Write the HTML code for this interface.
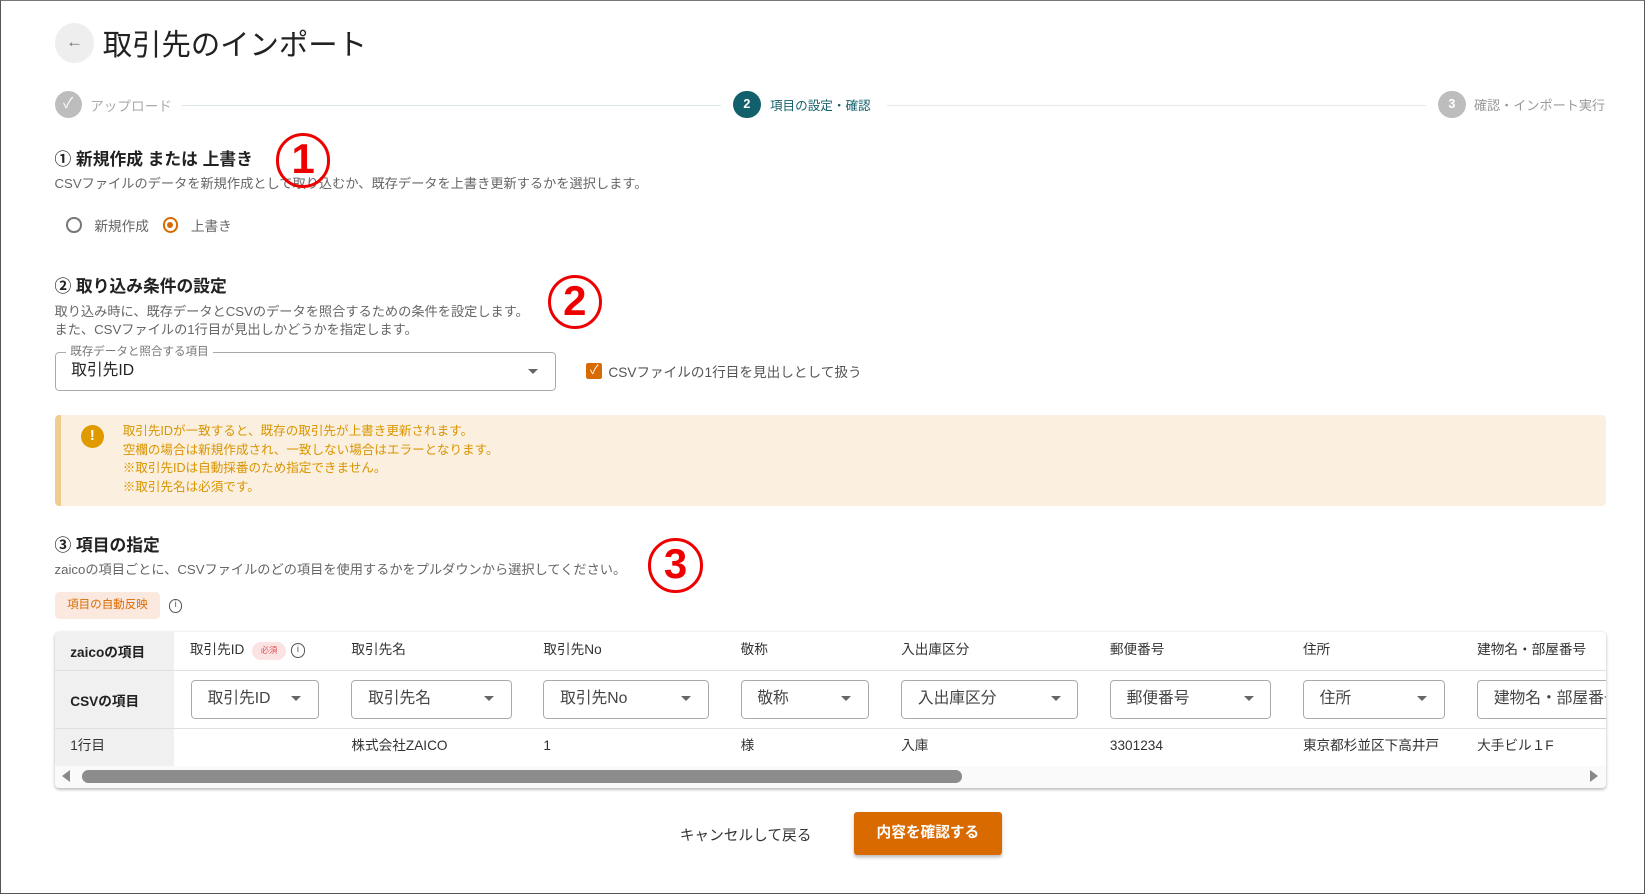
<!DOCTYPE html>
<html><head><meta charset="utf-8"><style>
*{box-sizing:border-box;margin:0;padding:0}
html,body{width:1645px;height:894px;overflow:hidden;background:#fff}
body{font-family:"Liberation Sans","Noto Sans CJK JP",sans-serif;color:#222}
#w{position:relative;width:1568px;height:852px;zoom:1.04911;border:1px solid #555;border-top:1px solid #777;overflow:hidden}
.a{position:absolute;white-space:nowrap}
.t{font-size:13px;color:#666}
.h{font-size:16px;font-weight:bold;color:#222}
.red{position:absolute;width:52px;height:52px;border:3px solid #e00;border-radius:50%;color:#e00;font-weight:bold;font-size:40px;line-height:44px;text-align:center}
.sel{position:absolute;border:1px solid #aaa;border-radius:4px;height:37px;font-size:15px;color:#444;padding-left:15px;line-height:35px;background:#fff;white-space:nowrap;overflow:hidden}
.sel .ar{position:absolute;right:16px;top:15px;width:0;height:0;border-left:5px solid transparent;border-right:5px solid transparent;border-top:5px solid #666}
.th{font-size:13px;color:#333;line-height:18px;height:18px}
</style></head><body><div id="w">
<div class="a" style="left:51px;top:21px;width:38px;height:38px;border-radius:50%;background:#eee;color:#777;font-size:16px;text-align:center;line-height:36px">←</div>
<div class="a" style="left:97px;top:20px;font-size:28px;color:#222">取引先のインポート</div>

<div class="a" style="left:51px;top:86px;width:26px;height:26px;border-radius:50%;background:#bdbdbd;color:#fff;text-align:center;line-height:26px;font-size:14px">✓</div>
<div class="a t" style="left:85px;top:90px;color:#aaa">アップロード</div>
<div class="a" style="left:173px;top:99px;width:513px;height:1px;background:#dde6e6"></div>
<div class="a" style="left:698px;top:86px;width:26px;height:26px;border-radius:50%;background:#12606b;color:#fff;text-align:center;line-height:26px;font-size:12px;font-weight:bold">2</div>
<div class="a" style="left:733px;top:90px;font-size:12px;color:#12606b">項目の設定・確認</div>
<div class="a" style="left:845px;top:99px;width:513px;height:1px;background:#e8e8e8"></div>
<div class="a" style="left:1370px;top:86px;width:26px;height:26px;border-radius:50%;background:#bdbdbd;color:#fff;text-align:center;line-height:26px;font-size:12px;font-weight:bold">3</div>
<div class="a" style="left:1404px;top:90px;font-size:12.5px;color:#999">確認・インポート実行</div>

<div class="a h" style="left:51px;top:138px">① 新規作成 または 上書き</div>
<div class="a t" style="left:51px;top:164px;font-size:12.6px">CSVファイルのデータを新規作成として取り込むか、既存データを上書き更新するかを選択します。</div>
<div class="red" style="left:262px;top:126px">1</div>
<div class="a" style="left:62px;top:206px;width:15px;height:15px;border:2px solid #777;border-radius:50%"></div>
<div class="a t" style="left:89px;top:204px">新規作成</div>
<div class="a" style="left:154px;top:206px;width:15px;height:15px;border:2px solid #d96a00;border-radius:50%"><div style="margin:2.5px;width:6px;height:6px;border-radius:50%;background:#d96a00"></div></div>
<div class="a t" style="left:181px;top:204px">上書き</div>

<div class="a h" style="left:51px;top:259px">② 取り込み条件の設定</div>
<div class="a t" style="left:51px;top:286px;font-size:12.6px">取り込み時に、既存データとCSVのデータを照合するための条件を設定します。</div>
<div class="a t" style="left:51px;top:303px;font-size:12.6px">また、CSVファイルの1行目が見出しかどうかを指定します。</div>
<div class="red" style="left:521px;top:261px">2</div>
<div class="sel" style="left:51px;top:335px;width:478px;color:#222">取引先ID<span class="ar"></span></div>
<div class="a" style="left:62px;top:326px;font-size:11px;color:#777;background:#fff;padding:0 4px">既存データと照合する項目</div>
<div class="a" style="left:558px;top:345px;width:15px;height:15px;background:#d96a00;border-radius:2px;color:#fff;font-size:12px;line-height:15px;text-align:center">✓</div>
<div class="a t" style="left:579px;top:343px;color:#555">CSVファイルの1行目を見出しとして扱う</div>

<div class="a" style="left:51px;top:395px;width:1479px;height:86px;background:#fbf0df;border-left:6px solid #efcd8e;border-radius:4px"></div>
<div class="a" style="left:76px;top:404px;width:22px;height:22px;border-radius:50%;background:#e09a00;color:#fff;font-weight:bold;font-size:14px;text-align:center;line-height:22px">!</div>
<div class="a" style="left:116px;top:401px;font-size:12px;color:#d99400;line-height:18px">取引先IDが一致すると、既存の取引先が上書き更新されます。<br>空欄の場合は新規作成され、一致しない場合はエラーとなります。<br>※取引先IDは自動採番のため指定できません。<br>※取引先名は必須です。</div>

<div class="a h" style="left:51px;top:506px">③ 項目の指定</div>
<div class="a t" style="left:51px;top:532px;font-size:12.6px">zaicoの項目ごとに、CSVファイルのどの項目を使用するかをプルダウンから選択してください。</div>
<div class="red" style="left:617px;top:512px">3</div>
<div class="a" style="left:51px;top:563px;width:101px;height:26px;background:#fbe9df;border-radius:4px;color:#d96a00;font-size:11px;text-align:center;line-height:26px">項目の自動反映</div>
<div class="a" style="left:160px;top:570px;width:13px;height:13px;border:1.5px solid #555;border-radius:50%;font-size:9px;text-align:center;line-height:10px;color:#555">i</div>

<div class="a" style="left:51px;top:601px;width:1479px;height:149px;box-shadow:0 1px 3px rgba(0,0,0,.3);border-radius:4px;background:#fff;overflow:hidden">
 <div class="a" style="left:0;top:0;width:114px;height:128px;background:#f0f0f0"></div>
 <div class="a" style="left:0;top:37px;width:1479px;height:1px;background:#e0e0e0"></div>
 <div class="a" style="left:0;top:92px;width:1479px;height:1px;background:#e0e0e0"></div>
 <div class="a" style="left:15px;top:9px;font-size:13px;font-weight:bold">zaicoの項目</div>
 <div class="a" style="left:15px;top:56px;font-size:13px;font-weight:bold">CSVの項目</div>
 <div class="a th" style="left:15px;top:101px">1行目</div>
 <div class="a th" style="left:129px;top:9px">取引先ID</div>
 <div class="a" style="left:188px;top:10px;width:33px;height:17px;border-radius:9px;background:#fbe3e3;color:#e05555;font-size:8px;text-align:center;line-height:17px">必須</div>
 <div class="a" style="left:225px;top:11px;width:14px;height:14px;border:1.5px solid #555;border-radius:50%;font-size:9px;text-align:center;line-height:11px;color:#555">i</div>
 <div class="a th" style="left:283px;top:9px">取引先名</div>
 <div class="a th" style="left:466px;top:9px">取引先No</div>
 <div class="a th" style="left:654px;top:9px">敬称</div>
 <div class="a th" style="left:807px;top:9px">入出庫区分</div>
 <div class="a th" style="left:1006px;top:9px">郵便番号</div>
 <div class="a th" style="left:1190px;top:9px">住所</div>
 <div class="a th" style="left:1356px;top:9px">建物名・部屋番号</div>
 <div class="sel" style="left:130px;top:46px;width:122px">取引先ID<span class="ar"></span></div>
 <div class="sel" style="left:283px;top:46px;width:153px">取引先名<span class="ar"></span></div>
 <div class="sel" style="left:466px;top:46px;width:158px">取引先No<span class="ar"></span></div>
 <div class="sel" style="left:654px;top:46px;width:122px">敬称<span class="ar"></span></div>
 <div class="sel" style="left:807px;top:46px;width:169px">入出庫区分<span class="ar"></span></div>
 <div class="sel" style="left:1006px;top:46px;width:154px">郵便番号<span class="ar"></span></div>
 <div class="sel" style="left:1190px;top:46px;width:135px">住所<span class="ar"></span></div>
 <div class="sel" style="left:1356px;top:46px;width:140px;border-right:none">建物名・部屋番号</div>
 <div class="a th" style="left:283px;top:101px">株式会社ZAICO</div>
 <div class="a th" style="left:466px;top:101px">1</div>
 <div class="a th" style="left:654px;top:101px">様</div>
 <div class="a th" style="left:807px;top:101px">入庫</div>
 <div class="a th" style="left:1006px;top:101px">3301234</div>
 <div class="a th" style="left:1190px;top:101px">東京都杉並区下高井戸</div>
 <div class="a th" style="left:1356px;top:101px">大手ビル１F</div>
 <div class="a" style="left:0;top:128px;width:1479px;height:21px;background:#fafafa"></div>
 <div class="a" style="left:7px;top:132px;width:0;height:0;border-top:6px solid transparent;border-bottom:6px solid transparent;border-right:8px solid #888"></div>
 <div class="a" style="left:26px;top:132px;width:839px;height:12px;border-radius:6px;background:#8c8c8c"></div>
 <div class="a" style="left:1464px;top:132px;width:0;height:0;border-top:6px solid transparent;border-bottom:6px solid transparent;border-left:8px solid #888"></div>
</div>

<div class="a" style="left:647px;top:784px;font-size:14px;color:#333">キャンセルして戻る</div>
<div class="a" style="left:813px;top:773px;width:141px;height:41px;background:#d96a00;border-radius:3px;color:#fff;font-weight:bold;font-size:14px;text-align:center;line-height:41px;box-shadow:0 2px 3px rgba(0,0,0,.25)">内容を確認する</div>
</div></body></html>
